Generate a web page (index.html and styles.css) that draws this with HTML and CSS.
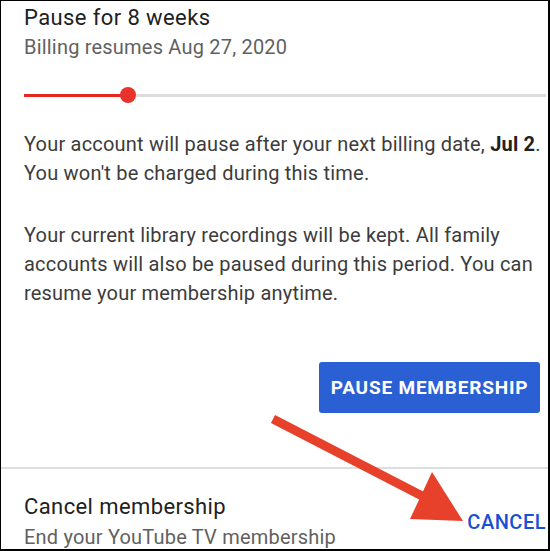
FILE: index.html
```html
<!DOCTYPE html>
<html lang="en">
<head>
    <meta charset="UTF-8">
    <meta name="viewport" content="width=device-width, initial-scale=1.0">
    <title>Pause membership</title>
    <link rel="stylesheet" href="styles.css">
</head>

<body>
    <div class="screen">
        <!-- pause section -->
        <div class="pause">
            <h2 class="title">Pause for 8 weeks</h2>
            <p class="subtitle">Billing resumes Aug 27, 2020</p>

            <div class="slider">
                <div class="slider-fill"></div>
                <div class="slider-thumb"></div>
                <div class="slider-track"></div>
            </div>

            <p class="info first">Your account will pause after your next billing date, <b>Jul 2</b>. You won't be charged during this time.</p>
            <p class="info">Your current library recordings will be kept. All family accounts will also be paused during this period. You can resume your membership anytime.</p>

            <div class="actions">
                <button class="button">PAUSE MEMBERSHIP</button>
            </div>
        </div>

        <!-- cancel section -->
        <div class="cancel">
            <div class="cancel-text">
                <h2 class="title">Cancel membership</h2>
                <p class="subtitle">End your YouTube TV membership</p>
            </div>
            <a class="cancel-link" href="#">CANCEL</a>
        </div>

        <!-- annotation arrow -->
        <svg class="arrow" width="550" height="551" viewBox="0 0 550 551">
            <line x1="273" y1="419" x2="428" y2="499" stroke="#e8412b" stroke-width="9"/>
            <polygon points="432,472 410,519 463,521" fill="#e8412b"/>
        </svg>
    </div>
</body>
</html>
```

FILE: styles.css
```css
body {
    margin: 0;
    padding: 0;
    font-family: 'Roboto', 'Liberation Sans', sans-serif;
    background-color: white;
}

.screen {
    position: relative;
    width: 550px;
    height: 551px;
    box-sizing: border-box;
    border-style: solid;
    border-color: black;
    border-width: 1px 2px 2px 1px;
    overflow: hidden;
    background-color: white;
}

.pause {
    padding: 3px 2px 0 23px;
}

.title {
    font-size: 22px;
    font-weight: normal;
    letter-spacing: 0.4px;
    color: #212121;
    line-height: 28px;
    margin: 0;
}

.subtitle {
    font-size: 20px;
    letter-spacing: 0.2px;
    color: #616161;
    line-height: 28px;
    margin: 1px 0 0 0;
}

.slider {
    position: relative;
    display: flex;
    align-items: center;
    height: 16px;
    margin: 26px 0 0 0;
}

.slider-fill {
    width: 100px;
    height: 3px;
    background-color: #e8281e;
}

.slider-thumb {
    width: 16px;
    height: 16px;
    border-radius: 50%;
    background-color: #e8322b;
    margin-left: -4px;
}

.slider-track {
    flex: 1;
    height: 3px;
    background-color: #dcdcdc;
}

.info {
    font-size: 20px;
    letter-spacing: 0.2px;
    color: #3c3c3c;
    line-height: 29px;
    margin: 33px 0 0 0;
}

.info.first {
    margin-top: 27px;
}

.info b {
    color: #212121;
    white-space: nowrap;
}

.actions {
    display: flex;
    justify-content: flex-end;
    margin-top: 54px;
    padding-right: 6px;
}

.button {
    font-family: 'Roboto', 'Liberation Sans', sans-serif;
    font-size: 19px;
    font-weight: bold;
    letter-spacing: 0.8px;
    color: white;
    background-color: #2b5fd4;
    border: none;
    border-radius: 3px;
    width: 221px;
    height: 51px;
    padding: 0;
}

.cancel {
    display: flex;
    align-items: center;
    justify-content: space-between;
    margin-top: 54px;
    border-top: 2px solid #dedede;
    padding: 24px 2px 0 23px;
}

.cancel .subtitle {
    margin-top: 2px;
}

.cancel-link {
    font-size: 20px;
    font-weight: 500;
    letter-spacing: 0.5px;
    color: #1a4fd3;
    text-decoration: none;
    line-height: 28px;
}

.arrow {
    position: absolute;
    left: -1px;
    top: -1px;
}
```
